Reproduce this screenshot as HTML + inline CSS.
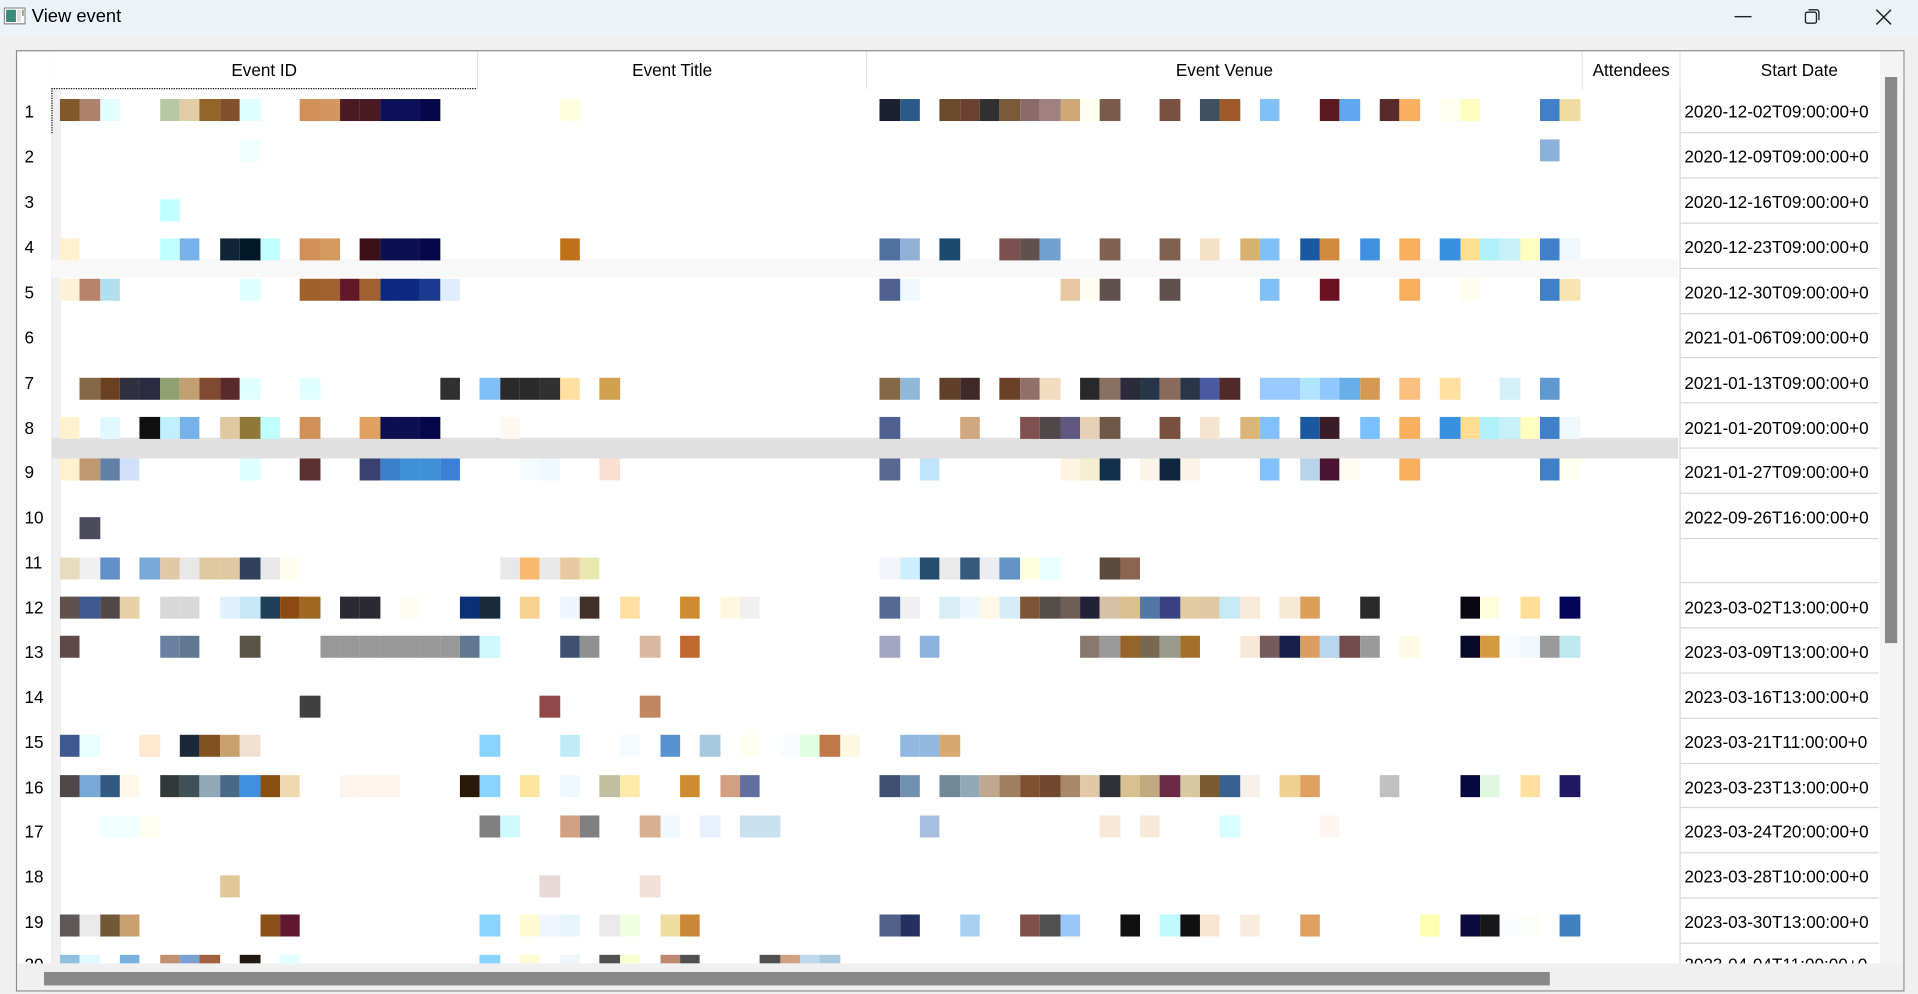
<!DOCTYPE html>
<html><head><meta charset="utf-8"><style>
html,body{margin:0;padding:0;width:1918px;height:994px;overflow:hidden;background:#f0f0f0}
#s{position:absolute;left:0;top:0;width:1568px;height:813px;transform:scale(1.2232,1.2226);transform-origin:0 0;font-family:"Liberation Sans",sans-serif;color:#000}
.tb{position:absolute;left:0;top:0;width:1568px;height:29px;background:#edf4f9}
.ttl{position:absolute;left:26px;top:5px;font-size:15px}
.frame{position:absolute;left:13px;top:41px;width:1542px;height:768px;border:1px solid #8a8a8a;background:#fff;overflow:hidden}
.hd{position:absolute;top:0;height:31px;font-size:14px;line-height:31px;text-align:center;border-right:1px solid #e3e3e3;background:#fff}
.rn{position:absolute;left:6px;font-size:14px}
.dt{position:absolute;left:1363px;font-size:14px;white-space:nowrap}
.gl{position:absolute;left:1360px;width:162px;height:1px;background:#d8d8d8}
.r{position:absolute;left:0;height:18px;width:1400px}
.r span{position:absolute;top:0;height:100%;width:16.4px;left:calc(35px + var(--k)*16.35px)}
</style></head><body><div id="s">
<div class="tb">
<svg style="position:absolute;left:3px;top:6px" width="18" height="14" viewBox="0 0 18 14"><rect x="0.5" y="0.5" width="17" height="13" fill="#fff" stroke="#888"/><rect x="2" y="2" width="8" height="10" fill="#3a8a7a"/><rect x="11" y="2" width="3" height="10" fill="#ddd"/><rect x="15" y="2" width="1.5" height="5" fill="#8a8"/></svg>
<div class="ttl">View event</div>
<svg style="position:absolute;left:1418px;top:13px" width="14" height="2"><rect width="14" height="1.2" fill="#222"/></svg>
<svg style="position:absolute;left:1475px;top:7px" width="13" height="13" viewBox="0 0 13 13" fill="none" stroke="#222" stroke-width="1.1"><rect x="1" y="3" width="9" height="9" rx="1.5"/><path d="M3.5 1h6.5a2 2 0 0 1 2 2v6.5"/></svg>
<svg style="position:absolute;left:1533px;top:7px" width="14" height="14" viewBox="0 0 14 14" stroke="#222" stroke-width="1.2"><path d="M1 1L13 13M13 1L1 13"/></svg>
</div>
<div class="frame">
<div style="position:absolute;left:0;top:0;width:28px;height:746px;border-right:1px solid #e6e6e6"></div>
<div class="hd" style="left:28px;width:348px">Event ID</div>
<div class="hd" style="left:377px;width:317px">Event Title</div>
<div class="hd" style="left:695px;width:584px">Event Venue</div>
<div class="hd" style="left:1280px;width:79px">Attendees</div>
<div class="hd" style="left:1360px;width:194px;border-right:none">Start Date</div>
<div style="position:absolute;left:28px;top:30px;width:347px;height:1px;border-top:1px dotted #000"></div>
<div style="position:absolute;left:28px;top:30px;width:0;height:37px;border-left:1px dotted #000"></div>
<div style="position:absolute;left:29px;top:32px;width:7px;height:714px;background:#f0f0f0"></div>
<div style="position:absolute;left:28px;top:170px;width:1330px;height:15px;background:#f8f8f8"></div>
<div style="position:absolute;left:28px;top:316px;width:1330px;height:17px;background:#e0e0e0"></div>
<div style="position:absolute;left:1359px;top:31px;width:1px;height:715px;background:#d8d8d8"></div>
<div style="position:absolute;left:1523px;top:0;width:19px;height:746px;background:#f4f4f4"></div>
<div style="position:absolute;left:1527px;top:21px;width:10px;height:463px;background:#888"></div>

<div class="rn" style="top:41px">1</div><div class="rn" style="top:78px">2</div><div class="rn" style="top:115px">3</div><div class="rn" style="top:152px">4</div><div class="rn" style="top:189px">5</div><div class="rn" style="top:226px">6</div><div class="rn" style="top:263px">7</div><div class="rn" style="top:300px">8</div><div class="rn" style="top:336px">9</div><div class="rn" style="top:373px">10</div><div class="rn" style="top:410px">11</div><div class="rn" style="top:447px">12</div><div class="rn" style="top:483px">13</div><div class="rn" style="top:520px">14</div><div class="rn" style="top:557px">15</div><div class="rn" style="top:594px">16</div><div class="rn" style="top:630px">17</div><div class="rn" style="top:667px">18</div><div class="rn" style="top:704px">19</div><div class="rn" style="top:739px">20</div>

<div class="dt" style="top:41px">2020-12-02T09:00:00+0</div><div class="dt" style="top:78px">2020-12-09T09:00:00+0</div><div class="dt" style="top:115px">2020-12-16T09:00:00+0</div><div class="dt" style="top:152px">2020-12-23T09:00:00+0</div><div class="dt" style="top:189px">2020-12-30T09:00:00+0</div><div class="dt" style="top:226px">2021-01-06T09:00:00+0</div><div class="dt" style="top:263px">2021-01-13T09:00:00+0</div><div class="dt" style="top:300px">2021-01-20T09:00:00+0</div><div class="dt" style="top:336px">2021-01-27T09:00:00+0</div><div class="dt" style="top:373px">2022-09-26T16:00:00+0</div><div class="dt" style="top:447px">2023-03-02T13:00:00+0</div><div class="dt" style="top:483px">2023-03-09T13:00:00+0</div><div class="dt" style="top:520px">2023-03-16T13:00:00+0</div><div class="dt" style="top:557px">2023-03-21T11:00:00+0</div><div class="dt" style="top:594px">2023-03-23T13:00:00+0</div><div class="dt" style="top:630px">2023-03-24T20:00:00+0</div><div class="dt" style="top:667px">2023-03-28T10:00:00+0</div><div class="dt" style="top:704px">2023-03-30T13:00:00+0</div><div class="dt" style="top:739px">2023-04-04T11:00:00+0</div>

<div class="gl" style="top:66px"></div><div class="gl" style="top:103px"></div><div class="gl" style="top:140px"></div><div class="gl" style="top:177px"></div><div class="gl" style="top:214px"></div><div class="gl" style="top:250px"></div><div class="gl" style="top:287px"></div><div class="gl" style="top:324px"></div><div class="gl" style="top:361px"></div><div class="gl" style="top:398px"></div><div class="gl" style="top:434px"></div><div class="gl" style="top:471px"></div><div class="gl" style="top:508px"></div><div class="gl" style="top:545px"></div><div class="gl" style="top:582px"></div><div class="gl" style="top:618px"></div><div class="gl" style="top:655px"></div><div class="gl" style="top:692px"></div><div class="gl" style="top:729px"></div>

<div class="r" style="top:39px"><span style="--k:0;background:#80582a"></span><span style="--k:1;background:#b0826d"></span><span style="--k:2;background:#e0ffff"></span><span style="--k:5;background:#b8c8a4"></span><span style="--k:6;background:#e2cca6"></span><span style="--k:7;background:#946429"></span><span style="--k:8;background:#824f2a"></span><span style="--k:9;background:#e0ffff"></span><span style="--k:12;background:#d09058"></span><span style="--k:13;background:#d49660"></span><span style="--k:14;background:#4a1a22"></span><span style="--k:15;background:#4a1a22"></span><span style="--k:16;background:#0c1058"></span><span style="--k:17;background:#0c1058"></span><span style="--k:18;background:#06064a"></span><span style="--k:25;background:#ffffe0"></span><span style="--k:41;background:#1a2030"></span><span style="--k:42;background:#2a5a8a"></span><span style="--k:44;background:#6a4a2a"></span><span style="--k:45;background:#6a4030"></span><span style="--k:46;background:#303030"></span><span style="--k:47;background:#7a5a3a"></span><span style="--k:48;background:#8a6a6a"></span><span style="--k:49;background:#a08080"></span><span style="--k:50;background:#d0a878"></span><span style="--k:51;background:#fffff0"></span><span style="--k:52;background:#7a5a4a"></span><span style="--k:55;background:#7a5040"></span><span style="--k:57;background:#405060"></span><span style="--k:58;background:#a05a2a"></span><span style="--k:60;background:#80c0f8"></span><span style="--k:63;background:#5a1a20"></span><span style="--k:64;background:#60a8f0"></span><span style="--k:66;background:#5a2a2a"></span><span style="--k:67;background:#f8b060"></span><span style="--k:69;background:#fffff0"></span><span style="--k:70;background:#fffcc0"></span><span style="--k:74;background:#4080c8"></span><span style="--k:75;background:#f0dca0"></span></div>
<div class="r" style="top:72px"><span style="--k:9;background:#f0ffff"></span><span style="--k:74;background:#8cb0dc"></span></div>
<div class="r" style="top:121px"><span style="--k:5;background:#c0ffff"></span></div>
<div class="r" style="top:153px"><span style="--k:0;background:#fff0d0"></span><span style="--k:5;background:#c0ffff"></span><span style="--k:6;background:#78b0e8"></span><span style="--k:8;background:#102438"></span><span style="--k:9;background:#001828"></span><span style="--k:10;background:#c0ffff"></span><span style="--k:12;background:#d09058"></span><span style="--k:13;background:#d49a60"></span><span style="--k:15;background:#3c1018"></span><span style="--k:16;background:#0c1050"></span><span style="--k:17;background:#0c1050"></span><span style="--k:18;background:#06064a"></span><span style="--k:25;background:#c07018"></span><span style="--k:41;background:#5070a0"></span><span style="--k:42;background:#90b0d8"></span><span style="--k:44;background:#1a4a70"></span><span style="--k:47;background:#7a5050"></span><span style="--k:48;background:#605050"></span><span style="--k:49;background:#70a0d0"></span><span style="--k:52;background:#806050"></span><span style="--k:55;background:#806050"></span><span style="--k:57;background:#f5e0c8"></span><span style="--k:59;background:#d8b070"></span><span style="--k:60;background:#80c0f8"></span><span style="--k:62;background:#1a58a0"></span><span style="--k:63;background:#d08a40"></span><span style="--k:65;background:#4090e0"></span><span style="--k:67;background:#f8b060"></span><span style="--k:69;background:#3890e0"></span><span style="--k:70;background:#ffe090"></span><span style="--k:71;background:#b0f0f8"></span><span style="--k:72;background:#c8f0f8"></span><span style="--k:73;background:#ffffc0"></span><span style="--k:74;background:#4080c8"></span><span style="--k:75;background:#f0f8ff"></span></div>
<div class="r" style="top:186px"><span style="--k:0;background:#fff0d8"></span><span style="--k:1;background:#b8826a"></span><span style="--k:2;background:#b0e0f0"></span><span style="--k:9;background:#e0ffff"></span><span style="--k:12;background:#a0602a"></span><span style="--k:13;background:#a06030"></span><span style="--k:14;background:#601828"></span><span style="--k:15;background:#a06030"></span><span style="--k:16;background:#0c2880"></span><span style="--k:17;background:#0c2880"></span><span style="--k:18;background:#1a3a90"></span><span style="--k:19;background:#e0ecff"></span><span style="--k:41;background:#506090"></span><span style="--k:42;background:#f0f8ff"></span><span style="--k:50;background:#e8c8a0"></span><span style="--k:51;background:#fffcf0"></span><span style="--k:52;background:#605050"></span><span style="--k:55;background:#605050"></span><span style="--k:60;background:#80c0f8"></span><span style="--k:63;background:#6a1020"></span><span style="--k:67;background:#f8b060"></span><span style="--k:70;background:#fffcf0"></span><span style="--k:74;background:#4080c8"></span><span style="--k:75;background:#f8e4b0"></span></div>
<div class="r" style="top:267px"><span style="--k:1;background:#846848"></span><span style="--k:2;background:#6a4020"></span><span style="--k:3;background:#303040"></span><span style="--k:4;background:#2a2a40"></span><span style="--k:5;background:#90a070"></span><span style="--k:6;background:#c0a070"></span><span style="--k:7;background:#804a30"></span><span style="--k:8;background:#5a2a2a"></span><span style="--k:9;background:#e0ffff"></span><span style="--k:12;background:#e0ffff"></span><span style="--k:19;background:#303030"></span><span style="--k:21;background:#80c0f8"></span><span style="--k:22;background:#2a2a2a"></span><span style="--k:23;background:#2a2a2a"></span><span style="--k:24;background:#303030"></span><span style="--k:25;background:#ffe0a0"></span><span style="--k:27;background:#d0a050"></span><span style="--k:41;background:#846848"></span><span style="--k:42;background:#90b8d8"></span><span style="--k:44;background:#604028"></span><span style="--k:45;background:#402828"></span><span style="--k:47;background:#6a4028"></span><span style="--k:48;background:#907068"></span><span style="--k:49;background:#f2dcc0"></span><span style="--k:51;background:#282828"></span><span style="--k:52;background:#8a7060"></span><span style="--k:53;background:#2a2a3a"></span><span style="--k:54;background:#263548"></span><span style="--k:55;background:#8a6a5a"></span><span style="--k:56;background:#2a3548"></span><span style="--k:57;background:#4a5aa0"></span><span style="--k:58;background:#502a2a"></span><span style="--k:60;background:#98c8ff"></span><span style="--k:61;background:#98c8ff"></span><span style="--k:62;background:#b0e4ff"></span><span style="--k:63;background:#90c8ff"></span><span style="--k:64;background:#68aee8"></span><span style="--k:65;background:#d49a54"></span><span style="--k:67;background:#fac080"></span><span style="--k:69;background:#ffe0a0"></span><span style="--k:72;background:#d4f0f8"></span><span style="--k:74;background:#6098d0"></span></div>
<div class="r" style="top:299px"><span style="--k:0;background:#fff0d0"></span><span style="--k:2;background:#e0f8ff"></span><span style="--k:4;background:#101010"></span><span style="--k:5;background:#c0f0ff"></span><span style="--k:6;background:#78b0e8"></span><span style="--k:8;background:#e0c8a0"></span><span style="--k:9;background:#907838"></span><span style="--k:10;background:#c0ffff"></span><span style="--k:12;background:#d09058"></span><span style="--k:15;background:#e0a060"></span><span style="--k:16;background:#0c1050"></span><span style="--k:17;background:#0c1050"></span><span style="--k:18;background:#06064a"></span><span style="--k:22;background:#fff8f0"></span><span style="--k:41;background:#506090"></span><span style="--k:45;background:#d0a880"></span><span style="--k:48;background:#805050"></span><span style="--k:49;background:#504848"></span><span style="--k:50;background:#605880"></span><span style="--k:51;background:#e8d0b8"></span><span style="--k:52;background:#705848"></span><span style="--k:55;background:#785040"></span><span style="--k:57;background:#f5e4d0"></span><span style="--k:59;background:#dab478"></span><span style="--k:60;background:#80c0ff"></span><span style="--k:62;background:#1a58a0"></span><span style="--k:63;background:#3a1c28"></span><span style="--k:65;background:#78c0ff"></span><span style="--k:67;background:#f8b060"></span><span style="--k:69;background:#3890e0"></span><span style="--k:70;background:#ffdc90"></span><span style="--k:71;background:#b0f0f8"></span><span style="--k:72;background:#c8f0f8"></span><span style="--k:73;background:#ffffc0"></span><span style="--k:74;background:#4080c8"></span><span style="--k:75;background:#f0f8ff"></span></div>
<div class="r" style="top:333px"><span style="--k:0;background:#fff0d0"></span><span style="--k:1;background:#c09870"></span><span style="--k:2;background:#6080a8"></span><span style="--k:3;background:#d0e0f8"></span><span style="--k:9;background:#e0ffff"></span><span style="--k:12;background:#5a3030"></span><span style="--k:15;background:#3a4070"></span><span style="--k:16;background:#3a80c8"></span><span style="--k:17;background:#4090d8"></span><span style="--k:18;background:#4090d8"></span><span style="--k:19;background:#3a80d8"></span><span style="--k:23;background:#f4fcff"></span><span style="--k:24;background:#f0f8ff"></span><span style="--k:27;background:#f8e0d0"></span><span style="--k:41;background:#586890"></span><span style="--k:43;background:#c0e4fa"></span><span style="--k:50;background:#fff4e0"></span><span style="--k:51;background:#f6eed0"></span><span style="--k:52;background:#12304a"></span><span style="--k:54;background:#fbf4e8"></span><span style="--k:55;background:#10263e"></span><span style="--k:56;background:#fdf4e8"></span><span style="--k:60;background:#80c0ff"></span><span style="--k:62;background:#b8d4ea"></span><span style="--k:63;background:#4a1430"></span><span style="--k:64;background:#fffcf4"></span><span style="--k:67;background:#f8b060"></span><span style="--k:74;background:#3f80c8"></span><span style="--k:75;background:#fffff0"></span></div>
<div class="r" style="top:381px"><span style="--k:1;background:#4a4a5a"></span></div>
<div class="r" style="top:414px"><span style="--k:0;background:#e8dcc0"></span><span style="--k:1;background:#f0f0f0"></span><span style="--k:2;background:#6090c8"></span><span style="--k:4;background:#78a8d8"></span><span style="--k:5;background:#e0c8a8"></span><span style="--k:6;background:#e8e8e8"></span><span style="--k:7;background:#e0c8a0"></span><span style="--k:8;background:#e0c8a0"></span><span style="--k:9;background:#30405a"></span><span style="--k:10;background:#e8e8e8"></span><span style="--k:11;background:#fffcf0"></span><span style="--k:22;background:#e8e8e8"></span><span style="--k:23;background:#f8b870"></span><span style="--k:24;background:#e8e8e8"></span><span style="--k:25;background:#e8c8a0"></span><span style="--k:26;background:#e8e8b0"></span><span style="--k:41;background:#f2f6fb"></span><span style="--k:42;background:#cdeefd"></span><span style="--k:43;background:#244d70"></span><span style="--k:44;background:#eaeaea"></span><span style="--k:45;background:#385a7a"></span><span style="--k:46;background:#eaeef2"></span><span style="--k:47;background:#6294c4"></span><span style="--k:48;background:#ffffe0"></span><span style="--k:49;background:#e8ffff"></span><span style="--k:52;background:#5c4a3e"></span><span style="--k:53;background:#8c6452"></span></div>
<div class="r" style="top:446px"><span style="--k:0;background:#605050"></span><span style="--k:1;background:#405890"></span><span style="--k:2;background:#504848"></span><span style="--k:3;background:#e8d0a8"></span><span style="--k:5;background:#d8d8d8"></span><span style="--k:6;background:#d8d8d8"></span><span style="--k:8;background:#e0f0ff"></span><span style="--k:9;background:#c8e8f8"></span><span style="--k:10;background:#20405a"></span><span style="--k:11;background:#8a4a10"></span><span style="--k:12;background:#a06820"></span><span style="--k:14;background:#2a2a30"></span><span style="--k:15;background:#2a2a30"></span><span style="--k:17;background:#fffcf4"></span><span style="--k:20;background:#0a3078"></span><span style="--k:21;background:#1a2a3a"></span><span style="--k:23;background:#f8d090"></span><span style="--k:25;background:#f0f4ff"></span><span style="--k:26;background:#403028"></span><span style="--k:28;background:#ffe0a0"></span><span style="--k:31;background:#d08a30"></span><span style="--k:33;background:#fff8e0"></span><span style="--k:34;background:#f0f0f0"></span><span style="--k:41;background:#536993"></span><span style="--k:42;background:#f0f0f2"></span><span style="--k:44;background:#d8eff6"></span><span style="--k:45;background:#eef6fd"></span><span style="--k:46;background:#fff8e6"></span><span style="--k:47;background:#d6edf5"></span><span style="--k:48;background:#7e5436"></span><span style="--k:49;background:#554d4a"></span><span style="--k:50;background:#715e55"></span><span style="--k:51;background:#23203a"></span><span style="--k:52;background:#d6c1a8"></span><span style="--k:53;background:#dbc08f"></span><span style="--k:54;background:#5277a6"></span><span style="--k:55;background:#384283"></span><span style="--k:56;background:#e2cba0"></span><span style="--k:57;background:#e1c9a6"></span><span style="--k:58;background:#c6ebf4"></span><span style="--k:59;background:#f8ead9"></span><span style="--k:61;background:#f6ead4"></span><span style="--k:62;background:#dc9e58"></span><span style="--k:65;background:#2a2a2a"></span><span style="--k:70;background:#090810"></span><span style="--k:71;background:#fffedc"></span><span style="--k:73;background:#ffde96"></span><span style="--k:75;background:#03045a"></span></div>
<div class="r" style="top:478px"><span style="--k:0;background:#604848"></span><span style="--k:5;background:#6a80a0"></span><span style="--k:6;background:#607890"></span><span style="--k:9;background:#5a5448"></span><span style="--k:13;background:#989898"></span><span style="--k:14;background:#989898"></span><span style="--k:15;background:#989898"></span><span style="--k:16;background:#989898"></span><span style="--k:17;background:#989898"></span><span style="--k:18;background:#989898"></span><span style="--k:19;background:#989898"></span><span style="--k:20;background:#607890"></span><span style="--k:21;background:#d0f8ff"></span><span style="--k:25;background:#405070"></span><span style="--k:26;background:#909090"></span><span style="--k:29;background:#d8b8a0"></span><span style="--k:31;background:#c06830"></span><span style="--k:41;background:#a4a6c4"></span><span style="--k:43;background:#8cb1dc"></span><span style="--k:51;background:#8a7870"></span><span style="--k:52;background:#9a9a9a"></span><span style="--k:53;background:#946428"></span><span style="--k:54;background:#786850"></span><span style="--k:55;background:#9a9a8c"></span><span style="--k:56;background:#a27028"></span><span style="--k:59;background:#f8e8d8"></span><span style="--k:60;background:#765a5e"></span><span style="--k:61;background:#161f4a"></span><span style="--k:62;background:#dc9e5e"></span><span style="--k:63;background:#bad6ee"></span><span style="--k:64;background:#724c4c"></span><span style="--k:65;background:#9a9a9a"></span><span style="--k:67;background:#fefae4"></span><span style="--k:70;background:#08082a"></span><span style="--k:71;background:#d49a42"></span><span style="--k:72;background:#f8fcfe"></span><span style="--k:73;background:#f0f8fc"></span><span style="--k:74;background:#9a9a9a"></span><span style="--k:75;background:#bee8f0"></span></div>
<div class="r" style="top:527px"><span style="--k:12;background:#404040"></span><span style="--k:24;background:#904848"></span><span style="--k:29;background:#c08860"></span></div>
<div class="r" style="top:559px"><span style="--k:0;background:#405890"></span><span style="--k:1;background:#e8ffff"></span><span style="--k:4;background:#ffe8d0"></span><span style="--k:6;background:#1a2838"></span><span style="--k:7;background:#805020"></span><span style="--k:8;background:#c8a070"></span><span style="--k:9;background:#f0e0d0"></span><span style="--k:21;background:#88d4ff"></span><span style="--k:25;background:#c0ecf8"></span><span style="--k:28;background:#f4fcff"></span><span style="--k:30;background:#5890d0"></span><span style="--k:32;background:#a8c8e0"></span><span style="--k:34;background:#fffff0"></span><span style="--k:36;background:#f8fcff"></span><span style="--k:37;background:#e0ffe0"></span><span style="--k:38;background:#c07848"></span><span style="--k:39;background:#fff8e0"></span><span style="--k:42;background:#90b8e0"></span><span style="--k:43;background:#90b8e0"></span><span style="--k:44;background:#d8a870"></span></div>
<div class="r" style="top:592px"><span style="--k:0;background:#504848"></span><span style="--k:1;background:#78a8d8"></span><span style="--k:2;background:#305880"></span><span style="--k:3;background:#fff8e8"></span><span style="--k:5;background:#303838"></span><span style="--k:6;background:#405058"></span><span style="--k:7;background:#90a8b8"></span><span style="--k:8;background:#486888"></span><span style="--k:9;background:#4090e0"></span><span style="--k:10;background:#8a5010"></span><span style="--k:11;background:#f0d8b0"></span><span style="--k:14;background:#fff4ec"></span><span style="--k:15;background:#fff4ec"></span><span style="--k:16;background:#fff4ec"></span><span style="--k:20;background:#2a1808"></span><span style="--k:21;background:#88d4ff"></span><span style="--k:23;background:#ffe4a0"></span><span style="--k:25;background:#f0f8ff"></span><span style="--k:27;background:#c0c0a0"></span><span style="--k:28;background:#ffe8a8"></span><span style="--k:31;background:#d08a30"></span><span style="--k:33;background:#d0a080"></span><span style="--k:34;background:#6070a0"></span><span style="--k:41;background:#405070"></span><span style="--k:42;background:#7090b0"></span><span style="--k:44;background:#708898"></span><span style="--k:45;background:#90a8b8"></span><span style="--k:46;background:#c0a890"></span><span style="--k:47;background:#a08060"></span><span style="--k:48;background:#805030"></span><span style="--k:49;background:#704830"></span><span style="--k:50;background:#a88868"></span><span style="--k:51;background:#e0c8a8"></span><span style="--k:52;background:#303038"></span><span style="--k:53;background:#d8c090"></span><span style="--k:54;background:#c0a880"></span><span style="--k:55;background:#6a2a48"></span><span style="--k:56;background:#d8c8a0"></span><span style="--k:57;background:#7a5a30"></span><span style="--k:58;background:#386090"></span><span style="--k:59;background:#f8f0e8"></span><span style="--k:61;background:#f0d090"></span><span style="--k:62;background:#e0a060"></span><span style="--k:66;background:#c0c0c0"></span><span style="--k:70;background:#080840"></span><span style="--k:71;background:#e0f8e0"></span><span style="--k:73;background:#ffe0a0"></span><span style="--k:75;background:#201860"></span></div>
<div class="r" style="top:625px"><span style="--k:2;background:#f0ffff"></span><span style="--k:3;background:#f0ffff"></span><span style="--k:4;background:#fffff0"></span><span style="--k:21;background:#808080"></span><span style="--k:22;background:#d0f8ff"></span><span style="--k:25;background:#d0a080"></span><span style="--k:26;background:#808080"></span><span style="--k:29;background:#d8b090"></span><span style="--k:30;background:#f0f8ff"></span><span style="--k:32;background:#e8f0fc"></span><span style="--k:34;background:#c8e0f0"></span><span style="--k:35;background:#c8e0f0"></span><span style="--k:43;background:#a8c0e0"></span><span style="--k:52;background:#f8e8d8"></span><span style="--k:54;background:#f8e8d8"></span><span style="--k:58;background:#d8ffff"></span><span style="--k:63;background:#fff4f0"></span></div>
<div class="r" style="top:674px"><span style="--k:8;background:#e0c898"></span><span style="--k:24;background:#e8d8d8"></span><span style="--k:29;background:#f0e0d8"></span></div>
<div class="r" style="top:706px"><span style="--k:0;background:#605858"></span><span style="--k:1;background:#eaeaea"></span><span style="--k:2;background:#705838"></span><span style="--k:3;background:#c8a070"></span><span style="--k:10;background:#8a5018"></span><span style="--k:11;background:#601830"></span><span style="--k:21;background:#88d4ff"></span><span style="--k:23;background:#fffad4"></span><span style="--k:24;background:#f0f6ff"></span><span style="--k:25;background:#e8f4fc"></span><span style="--k:27;background:#eaeaea"></span><span style="--k:28;background:#f0ffe0"></span><span style="--k:30;background:#eedca0"></span><span style="--k:31;background:#c88838"></span><span style="--k:41;background:#506088"></span><span style="--k:42;background:#243060"></span><span style="--k:45;background:#a8d0f0"></span><span style="--k:48;background:#805048"></span><span style="--k:49;background:#505050"></span><span style="--k:50;background:#98c8f8"></span><span style="--k:53;background:#101010"></span><span style="--k:55;background:#c0f8ff"></span><span style="--k:56;background:#101010"></span><span style="--k:57;background:#f8e4d0"></span><span style="--k:59;background:#f8ecdc"></span><span style="--k:62;background:#e0a060"></span><span style="--k:68;background:#ffffb0"></span><span style="--k:70;background:#0a0a40"></span><span style="--k:71;background:#181818"></span><span style="--k:72;background:#fafcff"></span><span style="--k:73;background:#fcfff8"></span><span style="--k:75;background:#4080c0"></span></div>
<div class="r" style="top:739px;height:7px"><span style="--k:0;background:#90c0e0"></span><span style="--k:1;background:#e0f8ff"></span><span style="--k:3;background:#78b0e0"></span><span style="--k:5;background:#c09070"></span><span style="--k:6;background:#78a0d0"></span><span style="--k:7;background:#a06040"></span><span style="--k:9;background:#201810"></span><span style="--k:11;background:#e0ffff"></span><span style="--k:21;background:#88d4ff"></span><span style="--k:23;background:#fffad4"></span><span style="--k:25;background:#eef6fc"></span><span style="--k:27;background:#505050"></span><span style="--k:28;background:#f8ffd0"></span><span style="--k:30;background:#c08870"></span><span style="--k:31;background:#505050"></span><span style="--k:35;background:#505050"></span><span style="--k:36;background:#d0a080"></span><span style="--k:37;background:#c0d8ec"></span><span style="--k:38;background:#a8c8e0"></span></div>
<div style="position:absolute;left:0;top:746px;width:1542px;height:22px;background:#f0f0f0"></div>
<div style="position:absolute;left:22px;top:753px;width:1231px;height:11px;background:#888"></div>
</div>
</div></body></html>
